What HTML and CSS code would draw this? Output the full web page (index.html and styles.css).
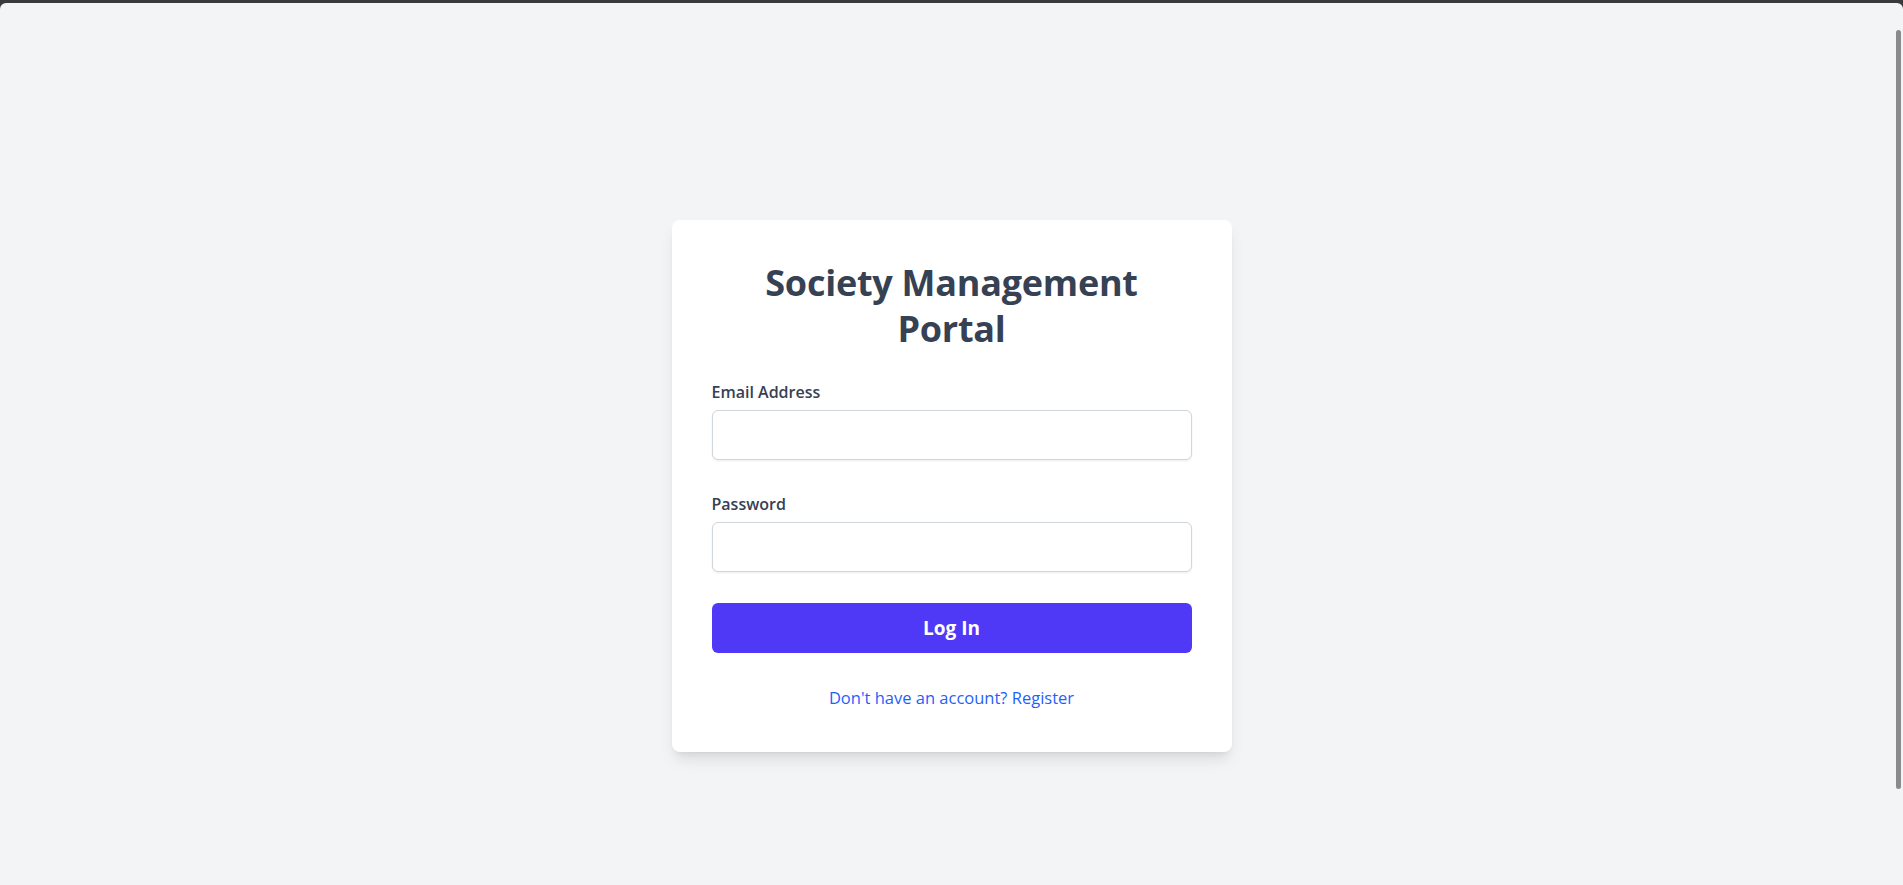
FILE: index.html
```html
<!DOCTYPE html>
<html lang="en">
<head>
<meta charset="utf-8">
<title>Society Management Portal</title>
<link rel="stylesheet" href="styles.css">
</head>
<body>
<div class="window">
  <main class="page">
    <div class="card">
      <h1 class="title">Society Management Portal</h1>
      <form class="form">
        <div class="field">
          <label class="label" for="email">Email Address</label>
          <input class="input" id="email" type="email">
        </div>
        <div class="field field-last">
          <label class="label" for="password">Password</label>
          <input class="input" id="password" type="password">
        </div>
        <button class="btn" type="button">Log In</button>
      </form>
      <p class="footer"><a class="link" href="#">Don't have an account? Register</a></p>
    </div>
  </main>
</div>
<div class="scrollbar"></div>
</body>
</html>
```
FILE: styles.css
```css
html, body {
  margin: 0;
  height: 100%;
  overflow: hidden;
}
body {
  background: #3a3a3a;
  font-family: "Open Sans", "Noto Sans", sans-serif;
}
.window {
  margin-top: 3px;
  height: calc(100% - 3px);
  background: #f3f4f6;
  border-radius: 6px 6px 0 0;
}
.page {
  display: flex;
  justify-content: center;
  padding-top: 217px;
}
.card {
  width: 560px;
  box-sizing: border-box;
  padding: 40px 40px 42px;
  background: #fff;
  border-radius: 8px;
  box-shadow: 0 10px 15px -3px rgba(0,0,0,0.1), 0 4px 6px -4px rgba(0,0,0,0.1);
}
.title {
  margin: 0 0 28px;
  font-size: 36px;
  line-height: 46px;
  font-weight: 700;
  letter-spacing: -0.25px;
  color: #364153;
  text-align: center;
}
.form {
  display: flex;
  flex-direction: column;
}
.field {
  display: flex;
  flex-direction: column;
  margin-bottom: 32px;
}
.field-last {
  margin-bottom: 31px;
}
.label {
  font-size: 16px;
  line-height: 24px;
  font-weight: 600;
  color: #364153;
  margin-bottom: 6px;
}
.input {
  height: 50px;
  box-sizing: border-box;
  border: 1px solid #d1d5dc;
  border-radius: 6px;
  box-shadow: 0 1px 2px rgba(0,0,0,0.08);
  padding: 0 12px;
  font-size: 16px;
  font-family: inherit;
}
.btn {
  height: 50px;
  border: none;
  border-radius: 6px;
  background: #4f39f6;
  color: #fff;
  font-family: inherit;
  font-size: 19px;
  font-weight: 700;
}
.footer {
  margin: 33px 0 0;
  text-align: center;
  font-size: 16.5px;
  line-height: 24px;
}
.link {
  color: #1f5ffc;
  text-decoration: none;
}
.scrollbar {
  position: fixed;
  right: 2px;
  top: 30px;
  width: 5px;
  height: 759px;
  background: #8a8a8a;
  border-radius: 3px;
}
```
